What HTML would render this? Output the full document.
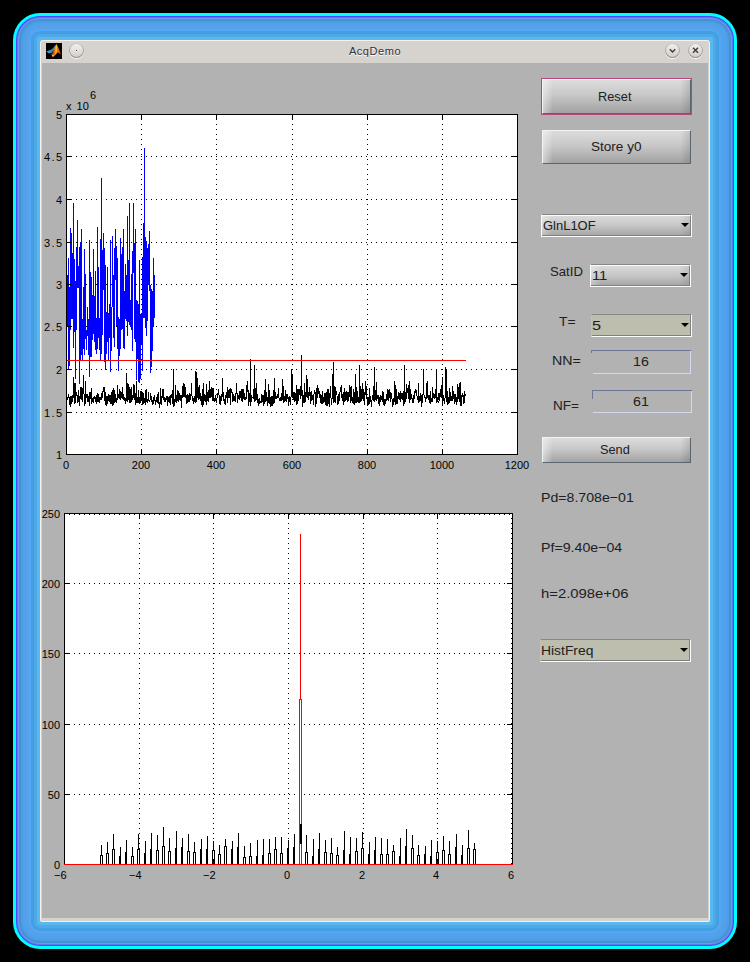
<!DOCTYPE html>
<html><head><meta charset="utf-8"><title>AcqDemo</title>
<style>
html,body{margin:0;padding:0;background:#000;}
body{width:750px;height:962px;position:relative;overflow:hidden;font-family:"Liberation Sans",sans-serif;}
#win{position:absolute;left:40px;top:40px;width:670px;height:882px;background:#d6d2ce;border-radius:3px 3px 2px 2px;
}
#win:before{content:"";position:absolute;left:0;top:0;right:0;bottom:0;border:1px solid #f4f0ec;border-radius:3px 3px 2px 2px;}
#content{position:absolute;left:42px;top:63px;width:666px;height:855px;background:#b2b2b2;}
#title{position:absolute;left:275px;width:200px;top:45px;text-align:center;font-size:11px;line-height:13px;color:#2e2e3a;letter-spacing:.55px;text-shadow:0 1px 0 #fff;}
.abs{position:absolute;}
.tl{position:absolute;font-size:11px;line-height:12px;color:#000;white-space:nowrap;}
.tl b{font-weight:normal;margin:0 1.4px;}
.tl.r{text-align:right;}
.tl.c{text-align:center;}
.btn{position:absolute;box-sizing:border-box;font-size:13px;color:#111;text-align:center;
 background:linear-gradient(#dcdcdc,#c8c8c8 45%,#a2a2a2);border:1px solid;border-color:#f0f4f4 #5c646c #5c646c #f0f4f4;}
.btn:after{content:"";position:absolute;left:0;right:0;top:0;bottom:0;background:linear-gradient(90deg,rgba(255,255,255,.45),rgba(255,255,255,0) 10px,rgba(0,0,0,0) calc(100% - 10px),rgba(0,0,0,.12));}
.pop{position:absolute;box-sizing:border-box;border-top:1px solid #868686;border-bottom:1px solid #fcfcfc;border-right:1px solid #fcfcfc;border-left:1px solid #fcfcfc;background:linear-gradient(#dcdcdc,#c6c6c6 50%,#a4a4a4);}
.pop:before{content:"";position:absolute;left:0;right:0;top:0;bottom:0;border-top:1px solid #fcfcfc;border-bottom:1px solid #808080;border-right:1px solid #808080;background:linear-gradient(90deg,rgba(255,255,255,.3),rgba(255,255,255,0) 10px,rgba(0,0,0,0) calc(100% - 10px),rgba(0,0,0,.08));}
.pop.flat{background:#bebeae;border-left:1px solid #c2c2b8;}
.pop.flat:before{border-top:none;background:none;}
.pop i{position:absolute;z-index:2;right:2px;top:8px;width:0;height:0;border-left:4px solid transparent;border-right:4px solid transparent;border-top:4.5px solid #000;}
.ed{position:absolute;background:#6e7696;}.el{position:absolute;background:#d4d8f0;}
.t{position:absolute;font-size:13.5px;line-height:16px;color:#202020;white-space:pre;transform-origin:0 0;}
.cbtn{position:absolute;width:15px;height:15px;border-radius:50%;background:linear-gradient(#cfcbc7,#8f8b87);box-shadow:0 1px 0 rgba(255,255,255,.8);}
.cbtn b{position:absolute;left:1px;top:1px;width:13px;height:13px;border-radius:50%;background:linear-gradient(#f1efed,#d3cfcb);}
</style></head><body>
<div class="abs" style="left:13px;top:13px;width:724px;height:936px;border-radius:27px;background:#00ffff"></div>
<div class="abs" style="left:16px;top:16px;width:718px;height:930px;border-radius:24px;background:#4a4af8"></div>
<div class="abs" style="left:17px;top:17px;width:716px;height:928px;border-radius:23px;background:#5c78f6"></div>
<div class="abs" style="left:18px;top:18px;width:714px;height:926px;border-radius:22px;background:#6c98f0"></div>
<div class="abs" style="left:19px;top:19px;width:712px;height:924px;border-radius:21px;background:#4890d2"></div>
<div class="abs" style="left:21px;top:21px;width:708px;height:920px;border-radius:19px;background:#48a0e0"></div>
<div class="abs" style="left:23px;top:23px;width:704px;height:916px;border-radius:17px;background:#50a0f0"></div>
<div class="abs" style="left:26px;top:26px;width:698px;height:910px;border-radius:14px;background:#58a0e8"></div>
<div class="abs" style="left:29px;top:29px;width:692px;height:904px;border-radius:11px;background:#50a8f6"></div>
<div class="abs" style="left:31px;top:31px;width:688px;height:900px;border-radius:9px;background:#42a0e2"></div>
<div class="abs" style="left:34px;top:34px;width:682px;height:894px;border-radius:6px;background:#50a8e8"></div>
<div class="abs" style="left:37px;top:37px;width:676px;height:888px;border-radius:3px;background:#58b8f0"></div>
<div id="win"></div>
<div id="content"></div>
<div id="title">AcqDemo</div>
<!-- matlab icon -->
<svg class="abs" style="left:46px;top:43px" width="16" height="16" viewBox="0 0 16 16">
<defs>
<linearGradient id="mg" x1="0" y1="0" x2="1" y2="0"><stop offset="0" stop-color="#7a2410"/><stop offset=".3" stop-color="#d8601a"/><stop offset=".5" stop-color="#ffb020"/><stop offset=".62" stop-color="#f07a18"/><stop offset="1" stop-color="#a82c14"/></linearGradient>
<linearGradient id="bg" x1="0" y1="0" x2="1" y2="0"><stop offset="0" stop-color="#46b4dc"/><stop offset=".6" stop-color="#2f86a8"/><stop offset="1" stop-color="#3a9cc0"/></linearGradient>
</defs>
<rect width="16" height="16" fill="#000"/>
<path d="M0.5,8.5 L4.7,6.8 L7,5.2 L9.6,1.8 L9,5 L7.7,7.5 L5.7,9.8 L3,10.4 Z" fill="url(#bg)"/>
<path d="M10.3,1 L12,3.7 L13.7,7.7 L15,11.4 L13.4,10.6 L11.7,9.3 L9.3,12 L7.4,13.8 L6.3,13.4 L5.2,11.4 L7,9 L9.3,3 Z" fill="url(#mg)"/>
<path d="M5.6,11.6 L7,12.2 L8.2,11.6 L7.4,13.8 L6.3,13.4 Z" fill="#ffd428"/>
<path d="M10.3,1 L10.9,4 L10.6,8.5 L9.9,8.5 L9.9,3 Z" fill="#ffc828" opacity=".85"/>
</svg>
<div class="cbtn" style="left:69px;top:43px"><b></b></div>
<div class="abs" style="left:76px;top:50px;width:1px;height:1px;background:#4a4a4a"></div>
<div class="abs" style="left:76px;top:51px;width:1px;height:1px;background:#fff"></div>
<div class="cbtn" style="left:665px;top:43px"><b></b></div>
<div class="cbtn" style="left:688px;top:43px"><b></b></div>
<svg class="abs" style="left:665px;top:43px" width="38" height="15" viewBox="0 0 38 15">
<path d="M4.8,6.2 L7.5,8.9 L10.2,6.2" stroke="#3a3a3a" stroke-width="1.4" fill="none"/>
<path d="M28,4.8 L33,9.8 M33,4.8 L28,9.8" stroke="#3a3a3a" stroke-width="1.4" fill="none"/>
</svg>

<svg class="abs" style="left:0;top:0" width="750" height="962" viewBox="0 0 750 962" shape-rendering="crispEdges">
<rect x="66" y="114" width="451" height="340" fill="#fff"/>
<path d="M141.5,114 V454 M216.5,114 V454 M292.5,114 V454 M367.5,114 V454 M442.5,114 V454 M66,412.5 H517 M66,369.5 H517 M66,326.5 H517 M66,284.5 H517 M66,242.5 H517 M66,199.5 H517 M66,156.5 H517" stroke="#000" stroke-width="1" stroke-dasharray="1 4" fill="none"/>
<path d="M66.0,203.2 L66.4,369.0 L66.8,355.8 L67.1,275.3 L67.5,301.3 L67.9,325.5 L68.3,258.4 L68.6,278.4 L69.0,370.2 L69.4,306.1 L69.8,354.3 L70.1,262.5 L70.5,228.4 L70.9,329.8 L71.3,233.0 L71.6,318.5 L72.0,292.9 L72.4,280.4 L72.8,253.1 L73.1,348.4 L73.5,203.2 L73.9,347.4 L74.3,296.0 L74.6,258.6 L75.0,277.5 L75.4,378.9 L75.8,337.6 L76.1,327.4 L76.5,310.0 L76.9,259.1 L77.3,220.2 L77.7,288.0 L78.0,281.9 L78.4,284.1 L78.8,288.0 L79.2,247.0 L79.5,383.9 L79.9,271.4 L80.3,283.8 L80.7,241.7 L81.0,360.0 L81.4,228.8 L81.8,318.9 L82.2,319.7 L82.5,348.1 L82.9,359.6 L83.3,324.0 L83.7,337.0 L84.0,286.8 L84.4,354.5 L84.8,248.6 L85.2,296.2 L85.5,318.3 L85.9,338.0 L86.3,341.3 L86.7,350.2 L87.0,330.9 L87.4,307.5 L87.8,315.3 L88.2,353.8 L88.5,319.1 L88.9,345.8 L89.3,376.6 L89.7,240.3 L90.1,281.2 L90.4,321.1 L90.8,356.5 L91.2,353.8 L91.6,357.3 L91.9,276.9 L92.3,340.3 L92.7,305.1 L93.1,334.2 L93.4,303.9 L93.8,249.2 L94.2,336.9 L94.6,322.3 L94.9,342.1 L95.3,270.6 L95.7,348.8 L96.1,350.2 L96.4,353.5 L96.8,353.7 L97.2,287.8 L97.6,226.9 L97.9,348.5 L98.3,267.4 L98.7,297.1 L99.1,349.8 L99.4,319.6 L99.8,317.7 L100.2,337.2 L100.6,239.1 L101.0,360.1 L101.3,291.6 L101.7,177.8 L102.1,335.0 L102.5,301.4 L102.8,270.5 L103.2,233.0 L103.6,290.1 L104.0,278.4 L104.3,361.7 L104.7,247.7 L105.1,369.8 L105.5,266.1 L105.8,264.7 L106.2,353.7 L106.6,312.8 L107.0,342.3 L107.3,332.8 L107.7,266.7 L108.1,342.0 L108.5,313.3 L108.8,360.1 L109.2,314.5 L109.6,304.0 L110.0,337.8 L110.3,371.5 L110.7,239.9 L111.1,351.2 L111.5,349.2 L111.9,342.2 L112.2,256.9 L112.6,235.8 L113.0,293.7 L113.4,338.3 L113.7,326.0 L114.1,262.5 L114.5,346.5 L114.9,248.2 L115.2,248.9 L115.6,228.8 L116.0,280.3 L116.4,275.9 L116.7,246.3 L117.1,349.2 L117.5,257.6 L117.9,323.7 L118.2,340.4 L118.6,370.9 L119.0,316.9 L119.4,348.4 L119.7,356.1 L120.1,347.8 L120.5,248.2 L120.9,238.5 L121.2,280.2 L121.6,257.4 L122.0,329.8 L122.4,311.1 L122.8,295.8 L123.1,228.8 L123.5,348.4 L123.9,303.7 L124.3,321.4 L124.6,349.3 L125.0,291.4 L125.4,319.0 L125.8,264.4 L126.1,308.0 L126.5,320.6 L126.9,302.4 L127.3,216.0 L127.6,336.2 L128.0,324.9 L128.4,275.9 L128.8,280.3 L129.1,253.1 L129.5,203.2 L129.9,324.5 L130.3,325.4 L130.6,300.5 L131.0,327.0 L131.4,329.6 L131.8,274.5 L132.1,300.2 L132.5,350.6 L132.9,251.1 L133.3,265.4 L133.7,203.2 L134.0,272.5 L134.4,339.0 L134.8,260.0 L135.2,228.8 L135.5,341.9 L135.9,323.7 L136.3,340.3 L136.7,380.0 L137.0,300.4 L137.4,306.3 L137.8,331.5 L138.2,382.4 L138.5,303.9 L138.9,359.9 L139.3,297.4 L139.7,259.7 L140.0,382.8 L140.4,324.4 L140.8,315.4 L141.2,313.5 L141.5,331.1 L141.9,332.6 L142.3,371.4 L142.7,257.3 L143.0,308.5 L143.4,267.2 L143.8,318.4 L144.2,148.0 L144.5,318.0 L144.9,288.1 L145.3,237.3 L145.7,297.6 L146.1,336.4 L146.4,241.5 L146.8,244.3 L147.2,319.7 L147.6,320.2 L147.9,248.0 L148.3,261.6 L148.7,285.1 L149.1,233.0 L149.4,231.0 L149.8,291.1 L150.2,284.6 L150.6,315.1 L150.9,373.0 L151.3,352.8 L151.7,290.5 L152.1,291.1 L152.4,318.0 L152.8,350.7 L153.2,275.5 L153.6,326.5 L153.9,258.5 L154.3,318.0" stroke="#0000ff" stroke-width="1" fill="none"/>
<path d="M66.4,397.0 L66.8,398.5 L67.1,399.4 L67.5,396.7 L67.9,399.6 L68.3,394.2 L68.6,396.4 L69.0,397.2 L69.4,403.3 L69.8,405.1 L70.1,403.0 L70.5,396.2 L70.9,407.2 L71.3,397.3 L71.6,404.0 L72.0,396.2 L72.4,401.1 L72.8,401.1 L73.1,391.6 L73.5,397.6 L73.9,377.5 L74.3,396.6 L74.6,404.1 L75.0,396.4 L75.4,383.1 L75.8,402.8 L76.1,393.6 L76.5,392.9 L76.9,393.0 L77.3,400.5 L77.7,399.5 L78.0,402.7 L78.4,398.1 L78.8,389.8 L79.2,401.0 L79.5,405.6 L79.9,397.6 L80.3,392.9 L80.7,399.0 L81.0,387.0 L81.4,398.7 L81.8,397.7 L82.2,402.4 L82.5,399.4 L82.9,393.1 L83.3,374.9 L83.7,390.4 L84.0,393.6 L84.4,395.0 L84.8,405.8 L85.2,401.5 L85.5,381.0 L85.9,400.2 L86.3,394.1 L86.7,398.1 L87.0,394.0 L87.4,397.5 L87.8,402.2 L88.2,401.3 L88.5,395.9 L88.9,400.1 L89.3,405.6 L89.7,394.9 L90.1,391.9 L90.4,392.5 L90.8,392.3 L91.2,404.1 L91.6,387.6 L91.9,398.5 L92.3,401.8 L92.7,399.8 L93.1,401.0 L93.4,403.1 L93.8,397.9 L94.2,397.0 L94.6,398.8 L94.9,397.0 L95.3,398.6 L95.7,401.1 L96.1,400.5 L96.4,395.1 L96.8,403.8 L97.2,400.3 L97.6,392.6 L97.9,396.6 L98.3,394.4 L98.7,397.8 L99.1,402.8 L99.4,399.7 L99.8,397.2 L100.2,399.7 L100.6,398.6 L101.0,396.9 L101.3,393.0 L101.7,399.9 L102.1,391.2 L102.5,397.8 L102.8,392.3 L103.2,391.4 L103.6,387.0 L104.0,391.8 L104.3,391.7 L104.7,387.3 L105.1,404.6 L105.5,402.0 L105.8,391.9 L106.2,406.0 L106.6,396.8 L107.0,396.8 L107.3,404.0 L107.7,401.8 L108.1,394.1 L108.5,394.7 L108.8,400.4 L109.2,401.4 L109.6,401.0 L110.0,395.1 L110.3,403.5 L110.7,397.5 L111.1,403.7 L111.5,392.5 L111.9,396.6 L112.2,389.7 L112.6,406.3 L113.0,405.5 L113.4,400.5 L113.7,388.4 L114.1,402.6 L114.5,389.9 L114.9,396.8 L115.2,396.8 L115.6,393.8 L116.0,402.1 L116.4,400.5 L116.7,403.0 L117.1,397.1 L117.5,385.4 L117.9,399.5 L118.2,394.8 L118.6,395.6 L119.0,396.6 L119.4,398.5 L119.7,389.5 L120.1,397.1 L120.5,399.9 L120.9,391.1 L121.2,393.0 L121.6,395.8 L122.0,398.1 L122.4,387.1 L122.8,397.4 L123.1,400.3 L123.5,394.1 L123.9,398.9 L124.3,397.4 L124.6,399.1 L125.0,398.2 L125.4,404.3 L125.8,401.3 L126.1,400.9 L126.5,373.2 L126.9,398.7 L127.3,396.0 L127.6,401.9 L128.0,383.0 L128.4,398.1 L128.8,395.2 L129.1,402.4 L129.5,401.5 L129.9,387.0 L130.3,393.8 L130.6,398.1 L131.0,403.4 L131.4,387.3 L131.8,401.7 L132.1,399.7 L132.5,398.1 L132.9,395.3 L133.3,397.3 L133.7,397.5 L134.0,384.2 L134.4,396.7 L134.8,394.8 L135.2,403.6 L135.5,392.8 L135.9,404.7 L136.3,400.5 L136.7,380.8 L137.0,401.0 L137.4,397.3 L137.8,402.6 L138.2,402.6 L138.5,390.4 L138.9,399.5 L139.3,397.8 L139.7,398.8 L140.0,403.7 L140.4,398.1 L140.8,390.8 L141.2,401.0 L141.5,394.8 L141.9,390.6 L142.3,402.8 L142.7,392.1 L143.0,405.3 L143.4,393.5 L143.8,399.1 L144.2,402.5 L144.5,398.0 L144.9,400.3 L145.3,404.5 L145.7,390.9 L146.1,390.3 L146.4,402.1 L146.8,399.4 L147.2,399.8 L147.6,398.7 L147.9,403.1 L148.3,391.6 L148.7,397.0 L149.1,401.8 L149.4,399.7 L149.8,401.0 L150.2,398.3 L150.6,393.6 L150.9,393.5 L151.3,402.3 L151.7,396.7 L152.1,401.5 L152.4,404.7 L152.8,402.3 L153.2,397.4 L153.6,404.0 L153.9,400.8 L154.3,394.8 L154.7,400.7 L155.1,400.8 L155.4,401.8 L155.8,405.1 L156.2,398.7 L156.6,397.2 L157.0,396.8 L157.3,402.1 L157.7,402.0 L158.1,392.5 L158.5,401.8 L158.8,398.9 L159.2,407.9 L159.6,402.2 L160.0,402.3 L160.3,403.9 L160.7,388.0 L161.1,399.2 L161.5,405.3 L161.8,397.2 L162.2,397.5 L162.6,397.4 L163.0,388.7 L163.3,397.8 L163.7,397.4 L164.1,400.8 L164.5,402.1 L164.8,397.6 L165.2,398.0 L165.6,401.7 L166.0,399.9 L166.3,397.1 L166.7,396.7 L167.1,400.2 L167.5,405.9 L167.9,396.2 L168.2,399.3 L168.6,401.8 L169.0,399.9 L169.4,402.8 L169.7,396.2 L170.1,399.3 L170.5,404.5 L170.9,395.7 L171.2,394.8 L171.6,398.4 L172.0,394.5 L172.4,404.0 L172.7,389.6 L173.1,395.7 L173.5,369.0 L173.9,407.2 L174.2,403.9 L174.6,400.3 L175.0,399.0 L175.4,385.2 L175.7,397.6 L176.1,403.0 L176.5,394.6 L176.9,396.4 L177.2,400.9 L177.6,392.6 L178.0,390.3 L178.4,398.7 L178.8,401.9 L179.1,393.6 L179.5,395.3 L179.9,399.0 L180.3,401.3 L180.6,398.8 L181.0,394.8 L181.4,397.1 L181.8,407.8 L182.1,393.8 L182.5,385.6 L182.9,395.2 L183.3,392.3 L183.6,397.3 L184.0,383.5 L184.4,397.3 L184.8,388.3 L185.1,387.4 L185.5,398.0 L185.9,392.3 L186.3,404.0 L186.6,395.1 L187.0,404.0 L187.4,394.1 L187.8,399.5 L188.1,398.3 L188.5,401.5 L188.9,395.9 L189.3,393.0 L189.6,401.6 L190.0,398.9 L190.4,395.8 L190.8,400.3 L191.2,389.3 L191.5,383.1 L191.9,395.8 L192.3,397.7 L192.7,396.4 L193.0,401.2 L193.4,403.7 L193.8,400.9 L194.2,395.8 L194.5,398.8 L194.9,401.4 L195.3,402.0 L195.7,397.2 L196.0,370.7 L196.4,392.8 L196.8,402.1 L197.2,378.3 L197.5,397.6 L197.9,382.6 L198.3,399.0 L198.7,394.1 L199.0,399.7 L199.4,385.5 L199.8,392.9 L200.2,400.7 L200.5,398.1 L200.9,392.9 L201.3,404.6 L201.7,400.8 L202.1,400.1 L202.4,406.6 L202.8,395.6 L203.2,383.3 L203.6,405.0 L203.9,402.8 L204.3,396.6 L204.7,395.1 L205.1,395.3 L205.4,398.7 L205.8,399.8 L206.2,404.6 L206.6,384.4 L206.9,388.5 L207.3,400.5 L207.7,397.3 L208.1,398.6 L208.4,399.3 L208.8,402.3 L209.2,380.6 L209.6,398.3 L209.9,392.8 L210.3,398.2 L210.7,395.5 L211.1,386.7 L211.4,396.6 L211.8,387.2 L212.2,400.5 L212.6,393.1 L213.0,388.0 L213.3,392.5 L213.7,400.4 L214.1,401.6 L214.5,399.0 L214.8,400.4 L215.2,395.2 L215.6,398.1 L216.0,400.8 L216.3,402.8 L216.7,400.3 L217.1,397.3 L217.5,392.8 L217.8,395.0 L218.2,393.3 L218.6,389.1 L219.0,394.8 L219.3,403.8 L219.7,398.4 L220.1,403.4 L220.5,396.5 L220.8,404.7 L221.2,397.5 L221.6,396.5 L222.0,393.8 L222.3,397.2 L222.7,378.0 L223.1,399.5 L223.5,392.3 L223.8,399.6 L224.2,401.8 L224.6,399.5 L225.0,403.7 L225.4,396.2 L225.7,404.9 L226.1,392.2 L226.5,397.5 L226.9,393.3 L227.2,402.6 L227.6,387.5 L228.0,389.7 L228.4,391.2 L228.7,397.9 L229.1,392.4 L229.5,397.5 L229.9,389.3 L230.2,404.8 L230.6,397.0 L231.0,388.5 L231.4,392.1 L231.7,391.7 L232.1,392.4 L232.5,396.2 L232.9,401.6 L233.2,394.3 L233.6,399.3 L234.0,398.5 L234.4,397.8 L234.7,397.2 L235.1,401.8 L235.5,393.1 L235.9,396.0 L236.3,389.9 L236.6,382.9 L237.0,392.6 L237.4,396.5 L237.8,403.2 L238.1,397.3 L238.5,396.0 L238.9,395.5 L239.3,396.8 L239.6,399.7 L240.0,391.5 L240.4,396.2 L240.8,390.6 L241.1,400.6 L241.5,395.3 L241.9,389.5 L242.3,389.5 L242.6,402.4 L243.0,397.6 L243.4,398.9 L243.8,389.5 L244.1,394.7 L244.5,400.3 L244.9,397.2 L245.3,399.6 L245.6,396.9 L246.0,399.3 L246.4,395.8 L246.8,389.4 L247.2,380.7 L247.5,392.1 L247.9,384.3 L248.3,405.5 L248.7,393.1 L249.0,392.6 L249.4,394.4 L249.8,397.5 L250.2,406.4 L250.5,358.8 L250.9,398.3 L251.3,394.9 L251.7,401.5 L252.0,397.2 L252.4,397.9 L252.8,397.8 L253.2,396.9 L253.5,393.6 L253.9,398.8 L254.3,364.8 L254.7,401.5 L255.0,399.1 L255.4,401.2 L255.8,394.8 L256.2,382.9 L256.5,385.0 L256.9,400.4 L257.3,394.5 L257.7,396.8 L258.1,405.0 L258.4,406.3 L258.8,400.7 L259.2,398.2 L259.6,403.7 L259.9,402.2 L260.3,401.8 L260.7,402.2 L261.1,403.4 L261.4,398.7 L261.8,393.7 L262.2,395.9 L262.6,401.8 L262.9,398.4 L263.3,397.3 L263.7,405.6 L264.1,391.6 L264.4,401.0 L264.8,403.5 L265.2,379.2 L265.6,402.4 L265.9,399.2 L266.3,401.1 L266.7,391.6 L267.1,399.0 L267.4,404.1 L267.8,406.4 L268.2,400.3 L268.6,384.2 L268.9,402.6 L269.3,389.7 L269.7,401.7 L270.1,404.3 L270.5,406.9 L270.8,398.5 L271.2,396.1 L271.6,398.2 L272.0,406.1 L272.3,400.7 L272.7,395.8 L273.1,400.3 L273.5,395.0 L273.8,403.8 L274.2,378.5 L274.6,402.7 L275.0,398.2 L275.3,398.2 L275.7,392.5 L276.1,399.3 L276.5,397.3 L276.8,398.0 L277.2,394.9 L277.6,395.0 L278.0,397.7 L278.3,392.4 L278.7,388.4 L279.1,400.8 L279.5,400.5 L279.8,400.7 L280.2,401.0 L280.6,400.7 L281.0,397.3 L281.4,393.2 L281.7,400.9 L282.1,395.2 L282.5,399.7 L282.9,379.1 L283.2,396.3 L283.6,393.4 L284.0,402.2 L284.4,401.7 L284.7,396.5 L285.1,401.3 L285.5,397.9 L285.9,390.5 L286.2,401.1 L286.6,401.6 L287.0,396.8 L287.4,399.0 L287.7,394.1 L288.1,398.4 L288.5,402.6 L288.9,406.2 L289.2,395.8 L289.6,401.1 L290.0,397.1 L290.4,405.3 L290.7,401.3 L291.1,395.7 L291.5,391.5 L291.9,369.0 L292.3,389.8 L292.6,397.8 L293.0,392.0 L293.4,395.8 L293.8,399.0 L294.1,400.0 L294.5,401.5 L294.9,391.6 L295.3,397.5 L295.6,401.2 L296.0,398.4 L296.4,385.2 L296.8,403.9 L297.1,403.8 L297.5,388.6 L297.9,404.0 L298.3,389.0 L298.6,400.5 L299.0,395.4 L299.4,389.5 L299.8,389.5 L300.1,393.1 L300.5,397.7 L300.9,399.1 L301.3,354.6 L301.6,387.6 L302.0,395.8 L302.4,390.4 L302.8,407.0 L303.2,399.4 L303.5,395.9 L303.9,399.6 L304.3,382.9 L304.7,402.9 L305.0,394.6 L305.4,392.2 L305.8,401.6 L306.2,392.4 L306.5,395.1 L306.9,375.5 L307.3,388.0 L307.7,397.7 L308.0,391.5 L308.4,395.1 L308.8,399.8 L309.2,393.6 L309.5,394.6 L309.9,387.0 L310.3,403.9 L310.7,403.7 L311.0,401.3 L311.4,393.6 L311.8,390.8 L312.2,398.1 L312.5,396.0 L312.9,397.2 L313.3,404.7 L313.7,401.5 L314.1,391.9 L314.4,392.4 L314.8,390.1 L315.2,393.3 L315.6,407.3 L315.9,395.8 L316.3,395.4 L316.7,403.6 L317.1,384.7 L317.4,398.2 L317.8,391.6 L318.2,392.7 L318.6,393.8 L318.9,388.4 L319.3,398.2 L319.7,391.6 L320.1,394.8 L320.4,403.1 L320.8,400.6 L321.2,403.0 L321.6,404.4 L321.9,394.7 L322.3,403.9 L322.7,391.4 L323.1,398.8 L323.4,398.8 L323.8,403.2 L324.2,395.3 L324.6,401.9 L324.9,393.6 L325.3,393.3 L325.7,404.9 L326.1,394.6 L326.5,406.1 L326.8,392.5 L327.2,406.2 L327.6,402.5 L328.0,389.1 L328.3,396.2 L328.7,393.3 L329.1,407.2 L329.5,392.8 L329.8,401.5 L330.2,386.5 L330.6,397.2 L331.0,398.0 L331.3,404.7 L331.7,401.9 L332.1,397.6 L332.5,388.7 L332.8,389.3 L333.2,362.2 L333.6,402.9 L334.0,403.2 L334.3,386.1 L334.7,395.8 L335.1,402.6 L335.5,387.5 L335.8,394.2 L336.2,392.8 L336.6,392.2 L337.0,395.4 L337.4,400.0 L337.7,404.7 L338.1,403.6 L338.5,401.7 L338.9,394.4 L339.2,401.1 L339.6,392.5 L340.0,391.8 L340.4,387.4 L340.7,387.2 L341.1,386.5 L341.5,396.1 L341.9,396.5 L342.2,400.5 L342.6,395.8 L343.0,396.6 L343.4,400.7 L343.7,405.4 L344.1,388.5 L344.5,393.9 L344.9,402.1 L345.2,399.7 L345.6,392.5 L346.0,400.0 L346.4,395.4 L346.7,390.6 L347.1,391.9 L347.5,398.0 L347.9,401.5 L348.3,399.1 L348.6,392.5 L349.0,398.1 L349.4,386.0 L349.8,384.9 L350.1,387.2 L350.5,392.7 L350.9,402.9 L351.3,385.6 L351.6,392.4 L352.0,400.5 L352.4,401.4 L352.8,400.3 L353.1,396.2 L353.5,403.7 L353.9,389.5 L354.3,399.0 L354.6,393.7 L355.0,404.7 L355.4,373.8 L355.8,390.7 L356.1,397.7 L356.5,402.8 L356.9,387.1 L357.3,399.3 L357.6,399.4 L358.0,401.6 L358.4,403.1 L358.8,397.6 L359.1,397.1 L359.5,364.8 L359.9,402.6 L360.3,387.3 L360.7,386.5 L361.0,401.5 L361.4,388.9 L361.8,397.0 L362.2,397.7 L362.5,383.2 L362.9,384.1 L363.3,399.6 L363.7,393.1 L364.0,400.5 L364.4,404.7 L364.8,392.0 L365.2,394.8 L365.5,393.0 L365.9,381.5 L366.3,399.0 L366.7,394.6 L367.0,396.6 L367.4,405.7 L367.8,398.6 L368.2,404.6 L368.5,397.3 L368.9,402.6 L369.3,403.0 L369.7,388.4 L370.0,399.8 L370.4,399.1 L370.8,395.7 L371.2,406.5 L371.6,402.1 L371.9,401.4 L372.3,395.3 L372.7,396.3 L373.1,400.8 L373.4,385.8 L373.8,400.4 L374.2,401.6 L374.6,367.3 L374.9,401.2 L375.3,389.8 L375.7,395.9 L376.1,401.2 L376.4,381.6 L376.8,399.8 L377.2,397.9 L377.6,396.0 L377.9,395.8 L378.3,395.5 L378.7,403.7 L379.1,397.4 L379.4,406.1 L379.8,399.1 L380.2,398.4 L380.6,394.7 L380.9,401.6 L381.3,396.2 L381.7,400.0 L382.1,397.4 L382.5,402.2 L382.8,391.9 L383.2,392.3 L383.6,404.8 L384.0,399.2 L384.3,399.7 L384.7,406.1 L385.1,403.6 L385.5,399.2 L385.8,403.4 L386.2,397.1 L386.6,393.7 L387.0,401.0 L387.3,394.4 L387.7,389.1 L388.1,401.0 L388.5,390.6 L388.8,390.4 L389.2,389.2 L389.6,397.6 L390.0,396.1 L390.3,401.6 L390.7,392.3 L391.1,393.2 L391.5,395.4 L391.8,397.6 L392.2,400.9 L392.6,406.8 L393.0,400.4 L393.4,405.1 L393.7,398.3 L394.1,401.6 L394.5,381.0 L394.9,400.6 L395.2,402.0 L395.6,385.4 L396.0,404.7 L396.4,390.1 L396.7,389.7 L397.1,397.9 L397.5,403.6 L397.9,400.5 L398.2,396.6 L398.6,392.2 L399.0,394.2 L399.4,394.9 L399.7,399.6 L400.1,390.7 L400.5,402.4 L400.9,400.8 L401.2,396.4 L401.6,392.8 L402.0,394.7 L402.4,394.4 L402.7,399.9 L403.1,391.3 L403.5,406.1 L403.9,400.7 L404.2,403.5 L404.6,364.8 L405.0,394.9 L405.4,392.5 L405.8,402.2 L406.1,397.4 L406.5,384.4 L406.9,395.6 L407.3,387.8 L407.6,390.8 L408.0,390.0 L408.4,399.0 L408.8,395.2 L409.1,381.0 L409.5,401.1 L409.9,402.7 L410.3,389.4 L410.6,400.3 L411.0,397.0 L411.4,393.7 L411.8,399.3 L412.1,398.5 L412.5,402.9 L412.9,398.0 L413.3,403.4 L413.6,395.0 L414.0,396.7 L414.4,390.6 L414.8,398.6 L415.1,390.7 L415.5,389.9 L415.9,389.4 L416.3,392.7 L416.7,394.7 L417.0,395.8 L417.4,399.7 L417.8,397.6 L418.2,397.5 L418.5,382.8 L418.9,403.1 L419.3,398.7 L419.7,395.9 L420.0,401.9 L420.4,393.0 L420.8,400.6 L421.2,395.3 L421.5,397.1 L421.9,406.6 L422.3,393.8 L422.7,403.3 L423.0,395.5 L423.4,369.0 L423.8,392.1 L424.2,397.4 L424.5,397.0 L424.9,396.3 L425.3,398.5 L425.7,401.5 L426.0,397.3 L426.4,397.7 L426.8,383.1 L427.2,394.4 L427.6,381.4 L427.9,397.5 L428.3,395.3 L428.7,397.1 L429.1,401.4 L429.4,401.9 L429.8,398.8 L430.2,391.3 L430.6,402.4 L430.9,403.5 L431.3,397.6 L431.7,400.5 L432.1,400.8 L432.4,387.0 L432.8,397.7 L433.2,394.1 L433.6,397.8 L433.9,392.9 L434.3,397.9 L434.7,398.4 L435.1,393.5 L435.4,397.9 L435.8,389.3 L436.2,401.0 L436.6,369.0 L436.9,402.7 L437.3,399.6 L437.7,396.9 L438.1,402.8 L438.5,400.5 L438.8,393.3 L439.2,398.8 L439.6,401.2 L440.0,393.2 L440.3,397.0 L440.7,394.2 L441.1,388.1 L441.5,397.5 L441.8,395.6 L442.2,376.7 L442.6,405.9 L443.0,396.4 L443.3,401.3 L443.7,395.1 L444.1,401.4 L444.5,399.8 L444.8,403.5 L445.2,393.1 L445.6,397.4 L446.0,367.3 L446.3,402.4 L446.7,390.1 L447.1,404.8 L447.5,391.0 L447.8,395.3 L448.2,400.2 L448.6,397.0 L449.0,404.0 L449.4,388.5 L449.7,403.4 L450.1,400.4 L450.5,392.1 L450.9,399.5 L451.2,396.3 L451.6,396.5 L452.0,400.9 L452.4,399.9 L452.7,385.8 L453.1,392.2 L453.5,394.2 L453.9,397.1 L454.2,401.7 L454.6,403.5 L455.0,394.0 L455.4,400.4 L455.7,398.9 L456.1,402.7 L456.5,404.8 L456.9,396.9 L457.2,402.0 L457.6,384.2 L458.0,386.7 L458.4,399.0 L458.7,390.5 L459.1,401.6 L459.5,390.5 L459.9,383.1 L460.2,393.8 L460.6,382.3 L461.0,406.3 L461.4,397.8 L461.8,398.8 L462.1,393.5 L462.5,397.4 L462.9,394.0 L463.3,396.6 L463.6,401.6 L464.0,403.5 L464.4,391.1 L464.8,400.9 L465.1,394.3 L465.5,395.4" stroke="#000" stroke-width="1" fill="none"/>
<path d="M66,360.5 H465.5" stroke="#ff0000" stroke-width="1" fill="none"/>
<path d="M66.5,454 v-5 M66.5,114 v5 M141.5,454 v-5 M141.5,114 v5 M216.5,454 v-5 M216.5,114 v5 M292.5,454 v-5 M292.5,114 v5 M367.5,454 v-5 M367.5,114 v5 M442.5,454 v-5 M442.5,114 v5 M517.5,454 v-5 M517.5,114 v5 M66,454.5 h5 M517,454.5 h-5 M66,412.5 h5 M517,412.5 h-5 M66,369.5 h5 M517,369.5 h-5 M66,326.5 h5 M517,326.5 h-5 M66,284.5 h5 M517,284.5 h-5 M66,242.5 h5 M517,242.5 h-5 M66,199.5 h5 M517,199.5 h-5 M66,156.5 h5 M517,156.5 h-5 M66,114.5 h5 M517,114.5 h-5" stroke="#000" stroke-width="1" fill="none"/>
<rect x="66.5" y="114.5" width="451" height="340" fill="none" stroke="#000"/>
<rect x="64" y="513" width="448" height="351" fill="#fff"/>
<path d="M139.5,513 V864 M213.5,513 V864 M288.5,513 V864 M363.5,513 V864 M437.5,513 V864 M64,794.5 H512 M64,724.5 H512 M64,653.5 H512 M64,583.5 H512 M64,514.5 H512 M511.5,513 V864" stroke="#000" stroke-width="1" stroke-dasharray="1 4" fill="none"/>
<rect x="100" y="855" width="3" height="9" fill="#000"/><rect x="101" y="856" width="1" height="9" fill="#fff"/><rect x="106" y="853" width="3" height="11" fill="#000"/><rect x="107" y="854" width="1" height="11" fill="#fff"/><rect x="112" y="849" width="3" height="15" fill="#000"/><rect x="113" y="850" width="1" height="15" fill="#fff"/><rect x="119" y="856" width="2" height="8" fill="#000"/><rect x="125" y="852" width="2" height="12" fill="#000"/><rect x="131" y="856" width="3" height="8" fill="#000"/><rect x="132" y="857" width="1" height="8" fill="#fff"/><rect x="137" y="849" width="3" height="15" fill="#000"/><rect x="138" y="850" width="1" height="15" fill="#fff"/><rect x="144" y="853" width="2" height="11" fill="#000"/><rect x="150" y="849" width="2" height="15" fill="#000"/><rect x="156" y="850" width="3" height="14" fill="#000"/><rect x="157" y="851" width="1" height="14" fill="#fff"/><rect x="162" y="846" width="3" height="18" fill="#000"/><rect x="163" y="847" width="1" height="18" fill="#fff"/><rect x="168" y="851" width="3" height="13" fill="#000"/><rect x="169" y="852" width="1" height="13" fill="#fff"/><rect x="175" y="848" width="2" height="16" fill="#000"/><rect x="181" y="847" width="2" height="17" fill="#000"/><rect x="187" y="851" width="3" height="13" fill="#000"/><rect x="188" y="852" width="1" height="13" fill="#fff"/><rect x="193" y="852" width="3" height="12" fill="#000"/><rect x="194" y="853" width="1" height="12" fill="#fff"/><rect x="200" y="849" width="2" height="15" fill="#000"/><rect x="206" y="849" width="2" height="15" fill="#000"/><rect x="212" y="850" width="3" height="14" fill="#000"/><rect x="213" y="851" width="1" height="14" fill="#fff"/><rect x="218" y="854" width="3" height="10" fill="#000"/><rect x="219" y="855" width="1" height="10" fill="#fff"/><rect x="224" y="846" width="3" height="18" fill="#000"/><rect x="225" y="847" width="1" height="18" fill="#fff"/><rect x="231" y="849" width="2" height="15" fill="#000"/><rect x="237" y="847" width="2" height="17" fill="#000"/><rect x="243" y="857" width="3" height="7" fill="#000"/><rect x="244" y="858" width="1" height="7" fill="#fff"/><rect x="249" y="856" width="3" height="8" fill="#000"/><rect x="250" y="857" width="1" height="8" fill="#fff"/><rect x="256" y="856" width="2" height="8" fill="#000"/><rect x="262" y="855" width="2" height="9" fill="#000"/><rect x="268" y="853" width="3" height="11" fill="#000"/><rect x="269" y="854" width="1" height="11" fill="#fff"/><rect x="274" y="849" width="3" height="15" fill="#000"/><rect x="275" y="850" width="1" height="15" fill="#fff"/><rect x="280" y="853" width="3" height="11" fill="#000"/><rect x="281" y="854" width="1" height="11" fill="#fff"/><rect x="287" y="848" width="2" height="16" fill="#000"/><rect x="293" y="847" width="2" height="17" fill="#000"/><rect x="305" y="852" width="3" height="12" fill="#000"/><rect x="306" y="853" width="1" height="12" fill="#fff"/><rect x="312" y="856" width="2" height="8" fill="#000"/><rect x="318" y="849" width="2" height="15" fill="#000"/><rect x="324" y="852" width="3" height="12" fill="#000"/><rect x="325" y="853" width="1" height="12" fill="#fff"/><rect x="330" y="853" width="3" height="11" fill="#000"/><rect x="331" y="854" width="1" height="11" fill="#fff"/><rect x="336" y="855" width="3" height="9" fill="#000"/><rect x="337" y="856" width="1" height="9" fill="#fff"/><rect x="343" y="850" width="2" height="14" fill="#000"/><rect x="349" y="854" width="2" height="10" fill="#000"/><rect x="355" y="851" width="3" height="13" fill="#000"/><rect x="356" y="852" width="1" height="13" fill="#fff"/><rect x="361" y="848" width="3" height="16" fill="#000"/><rect x="362" y="849" width="1" height="16" fill="#fff"/><rect x="368" y="854" width="2" height="10" fill="#000"/><rect x="374" y="850" width="2" height="14" fill="#000"/><rect x="380" y="854" width="3" height="10" fill="#000"/><rect x="381" y="855" width="1" height="10" fill="#fff"/><rect x="386" y="854" width="3" height="10" fill="#000"/><rect x="387" y="855" width="1" height="10" fill="#fff"/><rect x="392" y="851" width="3" height="13" fill="#000"/><rect x="393" y="852" width="1" height="13" fill="#fff"/><rect x="399" y="856" width="2" height="8" fill="#000"/><rect x="405" y="846" width="2" height="18" fill="#000"/><rect x="411" y="848" width="3" height="16" fill="#000"/><rect x="412" y="849" width="1" height="16" fill="#fff"/><rect x="417" y="855" width="3" height="9" fill="#000"/><rect x="418" y="856" width="1" height="9" fill="#fff"/><rect x="424" y="854" width="2" height="10" fill="#000"/><rect x="430" y="856" width="2" height="8" fill="#000"/><rect x="436" y="852" width="3" height="12" fill="#000"/><rect x="437" y="853" width="1" height="12" fill="#fff"/><rect x="442" y="850" width="3" height="14" fill="#000"/><rect x="443" y="851" width="1" height="14" fill="#fff"/><rect x="448" y="854" width="3" height="10" fill="#000"/><rect x="449" y="855" width="1" height="10" fill="#fff"/><rect x="455" y="847" width="2" height="17" fill="#000"/><rect x="461" y="855" width="2" height="9" fill="#000"/><rect x="467" y="848" width="3" height="16" fill="#000"/><rect x="468" y="849" width="1" height="16" fill="#fff"/><rect x="473" y="849" width="3" height="15" fill="#000"/><rect x="474" y="850" width="1" height="15" fill="#fff"/>
<path d="M101.5,845 V855 M107.5,842 V853 M113.5,834 V849 M120.5,847 V856 M126.5,840 V852 M132.5,847 V856 M138.5,834 V849 M145.5,841 V853 M151.5,833 V849 M157.5,835 V850 M163.5,827 V846 M169.5,838 V851 M176.5,831 V848 M182.5,838 V847 M188.5,834 V851 M194.5,842 V852 M201.5,839 V849 M207.5,836 V849 M213.5,841 V850 M219.5,845 V854 M225.5,839 V846 M232.5,841 V849 M238.5,833 V847 M244.5,846 V857 M250.5,843 V856 M257.5,840 V856 M263.5,839 V855 M269.5,839 V853 M275.5,837 V849 M281.5,837 V853 M288.5,840 V848 M294.5,834 V847 M306.5,835 V852 M313.5,839 V856 M319.5,833 V849 M325.5,840 V852 M331.5,838 V853 M337.5,847 V855 M344.5,831 V850 M350.5,837 V854 M356.5,838 V851 M362.5,832 V848 M369.5,842 V854 M375.5,837 V850 M381.5,838 V854 M387.5,839 V854 M393.5,845 V851 M400.5,838 V856 M406.5,829 V846 M412.5,835 V848 M418.5,845 V855 M425.5,846 V854 M431.5,840 V856 M437.5,841 V852 M443.5,836 V850 M449.5,841 V854 M456.5,834 V847 M462.5,845 V855 M468.5,830 V848 M474.5,843 V849" stroke="#000" fill="none"/>
<path d="M64.5,864 v-5 M64.5,513 v5 M139.5,864 v-5 M139.5,513 v5 M213.5,864 v-5 M213.5,513 v5 M288.5,864 v-5 M288.5,513 v5 M363.5,864 v-5 M363.5,513 v5 M437.5,864 v-5 M437.5,513 v5 M512.5,864 v-5 M512.5,513 v5 M64,864.5 h5 M512,864.5 h-5 M64,794.5 h5 M512,794.5 h-5 M64,724.5 h5 M512,724.5 h-5 M64,653.5 h5 M512,653.5 h-5 M64,583.5 h5 M512,583.5 h-5 M64,513.5 h5 M512,513.5 h-5" stroke="#000" stroke-width="1" fill="none"/>
<rect x="64.5" y="513.5" width="448" height="351" fill="none" stroke="#000"/>
<path d="M64,864.5 H513" stroke="#ff0000" fill="none"/>
<rect x="299.5" y="699.5" width="2" height="165" fill="#fff" stroke="#ff0000"/>
<rect x="300" y="824" width="2" height="20" fill="#000"/>
<path d="M300.5,534 V700" stroke="#ff0000" fill="none"/>
</svg>
<div class="tl r" style="left:20px;width:42px;top:449px">1</div>
<div class="tl r" style="left:20px;width:42px;top:407px">1<b>.</b>5</div>
<div class="tl r" style="left:20px;width:42px;top:364px">2</div>
<div class="tl r" style="left:20px;width:42px;top:321px">2<b>.</b>5</div>
<div class="tl r" style="left:20px;width:42px;top:279px">3</div>
<div class="tl r" style="left:20px;width:42px;top:237px">3<b>.</b>5</div>
<div class="tl r" style="left:20px;width:42px;top:194px">4</div>
<div class="tl r" style="left:20px;width:42px;top:151px">4<b>.</b>5</div>
<div class="tl r" style="left:20px;width:42px;top:109px">5</div>
<div class="tl c" style="left:46px;width:40px;top:459px">0</div>
<div class="tl c" style="left:121px;width:40px;top:459px">200</div>
<div class="tl c" style="left:196px;width:40px;top:459px">400</div>
<div class="tl c" style="left:272px;width:40px;top:459px">600</div>
<div class="tl c" style="left:347px;width:40px;top:459px">800</div>
<div class="tl c" style="left:422px;width:40px;top:459px">1000</div>
<div class="tl c" style="left:497px;width:40px;top:459px">1200</div>
<div class="tl r" style="left:20px;width:40px;top:859px">0</div>
<div class="tl r" style="left:20px;width:40px;top:789px">50</div>
<div class="tl r" style="left:20px;width:40px;top:719px">100</div>
<div class="tl r" style="left:20px;width:40px;top:648px">150</div>
<div class="tl r" style="left:20px;width:40px;top:578px">200</div>
<div class="tl r" style="left:20px;width:40px;top:508px">250</div>
<div class="tl c" style="left:40.4px;width:40px;top:869px">&minus;6</div>
<div class="tl c" style="left:115.4px;width:40px;top:869px">&minus;4</div>
<div class="tl c" style="left:189.4px;width:40px;top:869px">&minus;2</div>
<div class="tl c" style="left:267px;width:40px;top:869px">0</div>
<div class="tl c" style="left:342px;width:40px;top:869px">2</div>
<div class="tl c" style="left:416px;width:40px;top:869px">4</div>
<div class="tl c" style="left:491px;width:40px;top:869px">6</div>
<div class="tl" style="left:66px;top:100px;word-spacing:2px">x 10</div>
<div class="tl" style="left:90px;top:89px">6</div>

<div class="btn" style="left:542px;top:79px;width:149px;height:35px;outline:1px solid #b8487c;"></div>
<div class="btn" style="left:542px;top:130px;width:149px;height:34px;"></div>
<div class="pop" style="left:541px;top:214px;width:151px;height:23px;"><i></i></div>
<div class="pop" style="left:590px;top:264px;width:101px;height:23px;"><i></i></div>
<div class="pop flat" style="left:591px;top:314px;width:101px;height:23px;"><i></i></div>
<div class="ed" style="left:591px;top:350px;width:100px;height:1px"></div><div class="ed" style="left:591px;top:350px;width:1px;height:3px"></div><div class="el" style="left:593px;top:373px;width:98px;height:1px"></div><div class="el" style="left:690px;top:351px;width:1px;height:23px"></div>
<div class="ed" style="left:592px;top:390px;width:100px;height:1px"></div><div class="ed" style="left:592px;top:390px;width:1px;height:9px"></div><div class="el" style="left:593px;top:412px;width:99px;height:1px"></div><div class="el" style="left:691px;top:391px;width:1px;height:22px"></div>
<div class="btn" style="left:542px;top:437px;width:149px;height:26px;"></div>
<div class="pop flat" style="left:540px;top:639px;width:151px;height:23px;"><i></i></div>
<div class="t" id="t0" style="left:598.4px;top:89px;transform:scaleX(0.948)">Reset</div>
<div class="t" id="t1" style="left:590.8px;top:139px;transform:scaleX(1.004)">Store y0</div>
<div class="t" id="t2" style="left:542.8px;top:218px;transform:scaleX(0.960)">GlnL1OF</div>
<div class="t" id="t3" style="left:550.4px;top:264px;transform:scaleX(0.974)">SatID</div>
<div class="t" id="t4" style="left:592.4px;top:268px;transform:scaleX(1.094)">11</div>
<div class="t" id="t5" style="left:559.2px;top:314px;transform:scaleX(1.027)">T=</div>
<div class="t" id="t6" style="left:592.4px;top:318px;transform:scaleX(1.206)">5</div>
<div class="t" id="t7" style="left:552.2px;top:353px;transform:scaleX(1.053)">NN=</div>
<div class="t" id="t8" style="left:632.8px;top:354px;transform:scaleX(1.053)">16</div>
<div class="t" id="t9" style="left:553.0px;top:398px;transform:scaleX(1.005)">NF=</div>
<div class="t" id="t10" style="left:632.8px;top:394px;transform:scaleX(1.059)">61</div>
<div class="t" id="t11" style="left:600.0px;top:442px;transform:scaleX(0.943)">Send</div>
<div class="t" id="t12" style="left:541.0px;top:490px;transform:scaleX(1.048)">Pd=8.708e&minus;01</div>
<div class="t" id="t13" style="left:541.0px;top:540px;transform:scaleX(1.050)">Pf=9.40e&minus;04</div>
<div class="t" id="t14" style="left:541.0px;top:586px;transform:scaleX(1.099)">h=2.098e+06</div>
<div class="t" id="t15" style="left:541.0px;top:643px;transform:scaleX(1.027)">HistFreq</div>
</body></html>
